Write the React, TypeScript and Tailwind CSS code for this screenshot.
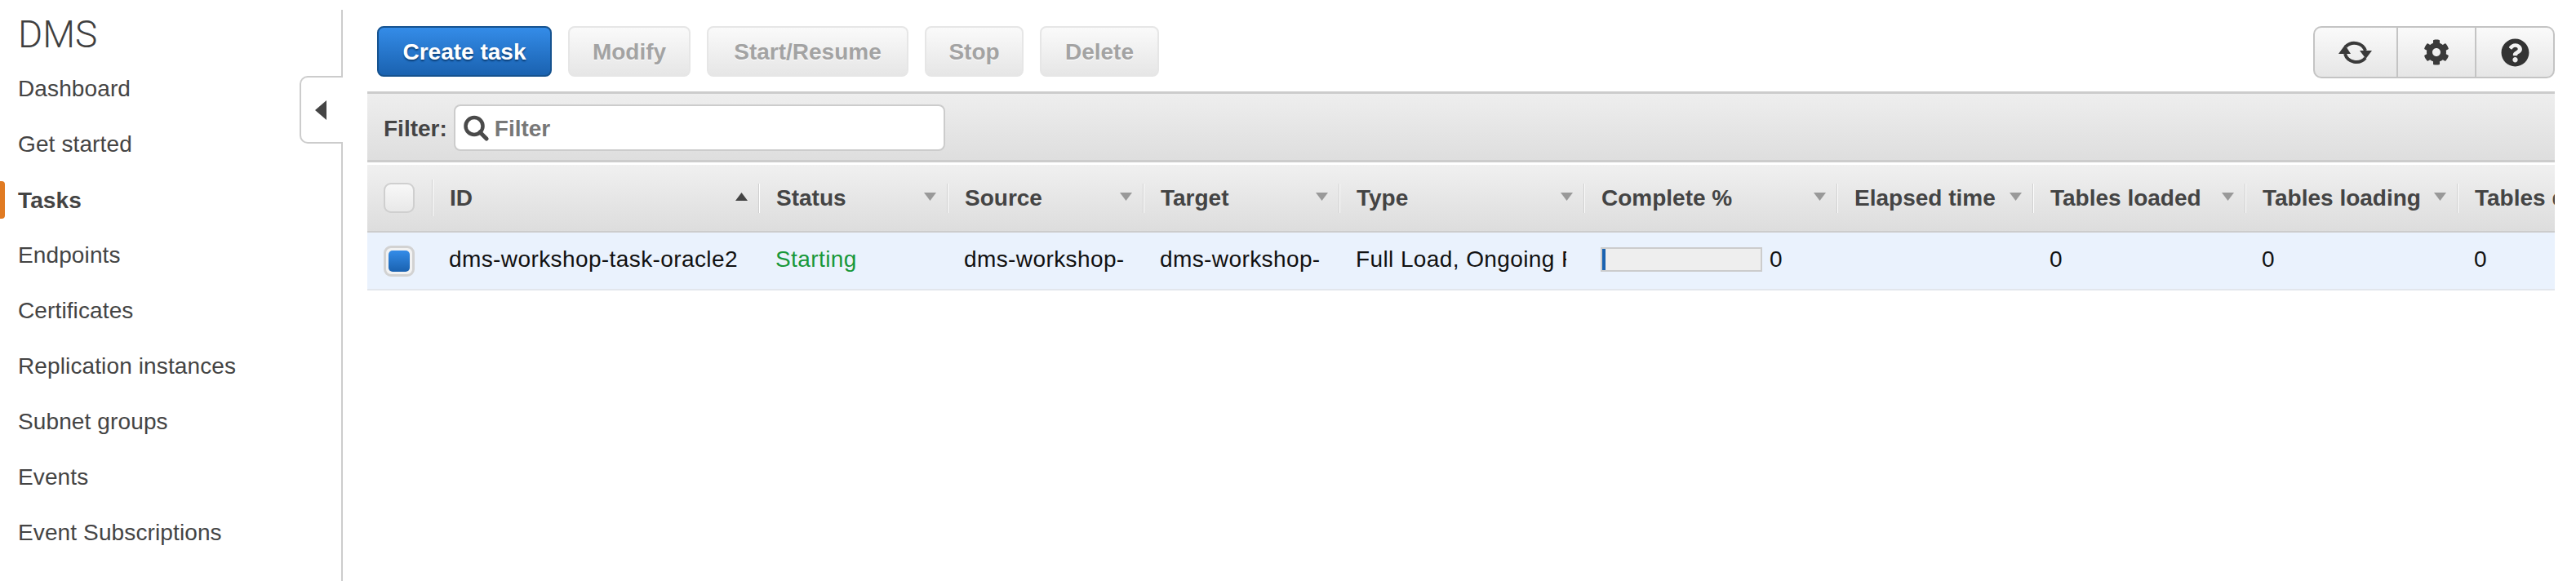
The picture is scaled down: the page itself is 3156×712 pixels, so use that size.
import { FaCog, FaQuestionCircle } from 'react-icons/fa';

const navItems = [
  'Dashboard',
  'Get started',
  'Tasks',
  'Endpoints',
  'Certificates',
  'Replication instances',
  'Subnet groups',
  'Events',
  'Event Subscriptions',
];

const columns = [
  { label: 'ID', width: 'w-[400px]', sort: 'up', value: 'dms-workshop-task-oracle2' },
  { label: 'Status', width: 'w-[231px]', sort: 'down', value: 'Starting' },
  { label: 'Source', width: 'w-[240px]', sort: 'down', value: 'dms-workshop-' },
  { label: 'Target', width: 'w-[240px]', sort: 'down', value: 'dms-workshop-' },
  { label: 'Type', width: 'w-[300px]', sort: 'down', value: 'Full Load, Ongoing Replication' },
  { label: 'Complete %', width: 'w-[310px]', sort: 'down', value: '' },
  { label: 'Elapsed time', width: 'w-[240px]', sort: 'down', value: '' },
  { label: 'Tables loaded', width: 'w-[260px]', sort: 'down', value: '0' },
  { label: 'Tables loading', width: 'w-[260px]', sort: 'down', value: '0' },
  { label: 'Tables queued', width: 'w-[260px]', sort: 'none', value: '0' },
];

function Divider() {
  return <span className="h-[36px] w-[2px] shrink-0 border-l border-[#cfcfcf] bg-white" />;
}

function SortArrow({ dir }: { dir: string }) {
  if (dir === 'none') return null;
  return (
    <svg width="15" height="10" viewBox="0 0 15 10" className="mb-[4px] mr-[13px] shrink-0">
      <polygon
        points={dir === 'up' ? '7.5,0 15,10 0,10' : '0,0 15,0 7.5,10'}
        fill={dir === 'up' ? '#444444' : '#999999'}
      />
    </svg>
  );
}

function ActionButton({ label, width }: { label: string; width: string }) {
  return (
    <button
      className={`h-[62px] rounded-[8px] border-2 border-[#e6e6e6] bg-gradient-to-b from-[#fafafa] to-[#e6e6e6] pt-[2px] text-[28px] font-bold text-[#a3a3a3] [text-shadow:0_1px_0_#ffffff] ${width}`}
    >
      {label}
    </button>
  );
}

function RefreshIcon() {
  return (
    <svg width="42" height="36" viewBox="0 0 42 36" fill="none">
      <path d="M9 11 A14.5 14 0 0 1 33 16" stroke="#3a3a3a" strokeWidth="4" />
      <path d="M33 25 A14.5 14 0 0 1 8 20" stroke="#3a3a3a" strokeWidth="4" />
      <polygon points="26,16 41,16 33.5,26" fill="#3a3a3a" />
      <polygon points="0,20 15,20 8,9" fill="#3a3a3a" />
    </svg>
  );
}

function SearchIcon() {
  return (
    <svg width="32" height="32" viewBox="0 0 32 32" fill="none" className="shrink-0">
      <circle cx="14" cy="13.5" r="10.5" stroke="#4a4a4a" strokeWidth="4.5" />
      <path d="M21 21 L29 29" stroke="#4a4a4a" strokeWidth="5" strokeLinecap="round" />
    </svg>
  );
}

export default function App() {
  return (
    <div className="flex h-[712px] w-[3156px] overflow-hidden bg-white font-['Liberation_Sans',Arial,sans-serif] text-[28px]">
      <aside className="relative mt-[12px] w-[420px] shrink-0 border-r-2 border-[#cccccc]">
        <h1 className="pl-[22px] pt-[5px] font-['Roboto',sans-serif] text-[46px] font-light leading-[50px] text-[#3f3f3f]">
          DMS
        </h1>
        <nav className="mt-[8px] flex flex-col tracking-[0.12px]">
          {navItems.map((item) => (
            <a
              key={item}
              className={`flex h-[68px] items-center pl-[22px] text-[#444444] ${
                item === 'Tasks' ? 'pt-[2px] font-bold' : ''
              }`}
            >
              {item}
            </a>
          ))}
        </nav>
        <span className="absolute left-0 top-[210px] h-[46px] w-[6px] rounded-r-[4px] bg-[#e07a22]" />
        <button className="absolute left-[367px] top-[81px] flex h-[83px] w-[53px] items-center rounded-l-[10px] border-2 border-r-0 border-[#cccccc] bg-white pl-[17px]">
          <svg width="14" height="24" viewBox="0 0 14 24">
            <polygon points="14,0 14,24 0,12" fill="#444444" />
          </svg>
        </button>
      </aside>

      <main className="flex min-w-0 flex-1 flex-col pl-[30px] pr-[26px]">
        <div className="flex h-[112px] shrink-0 items-start justify-between pt-[32px] pl-[12px]">
          <div className="flex gap-[20px]">
            <button className="h-[62px] w-[214px] rounded-[8px] border-2 border-[#15528f] bg-gradient-to-b from-[#348ce8] to-[#1a62b0] pt-[2px] text-[28px] font-bold text-white [text-shadow:0_2px_2px_#0b3f77]">
              Create task
            </button>
            <ActionButton label="Modify" width="w-[150px]" />
            <ActionButton label="Start/Resume" width="w-[247px]" />
            <ActionButton label="Stop" width="w-[121px]" />
            <ActionButton label="Delete" width="w-[146px]" />
          </div>
          <div className="flex h-[64px] w-[296px] divide-x-2 divide-[#c4c4c4] rounded-[10px] border-2 border-[#c4c4c4] bg-gradient-to-b from-[#fafafa] to-[#e6e6e6]">
            <button className="flex w-[102px] items-center justify-center">
              <RefreshIcon />
            </button>
            <button className="flex w-[96px] items-center justify-center">
              <FaCog size={32} color="#3a3a3a" />
            </button>
            <button className="flex flex-1 items-center justify-center">
              <FaQuestionCircle size={35} color="#333333" />
            </button>
          </div>
        </div>

        <div className="flex h-[87px] shrink-0 items-center border-y-[3px] border-[#cccccc] bg-gradient-to-b from-[#eeeeee] to-[#dedede] pl-[20px] pt-[2px]">
          <label className="pt-[2px] font-bold text-[#444444]">Filter:</label>
          <div className="ml-[8px] flex h-[57px] w-[602px] items-center gap-[7px] rounded-[8px] border-2 border-[#cccccc] bg-white pl-[9px]">
            <SearchIcon />
            <span className="pt-[2px] font-bold text-[#777777]">Filter</span>
          </div>
        </div>

        <div className="mt-[3px] flex h-[83px] shrink-0 items-center overflow-hidden border-b-2 border-[#cccccc] bg-gradient-to-b from-[#f0f0f0] to-[#dddddd]">
          <div className="flex h-full w-[81px] shrink-0 items-center pl-[20px]">
            <span className="h-[37px] w-[38px] rounded-[9px] border-2 border-[#cfcfcf] bg-gradient-to-b from-[#f8f8f8] to-[#e8e8e8]" />
            <span className="ml-auto h-[45px] w-[2px] border-l border-[#cfcfcf] bg-white" />
          </div>
          {columns.map((col) => (
            <div key={col.label} className={`flex h-full shrink-0 items-center pl-[20px] ${col.width}`}>
              <span className="min-w-0 flex-1 whitespace-nowrap font-bold text-[#444444]">{col.label}</span>
              <SortArrow dir={col.sort} />
              <Divider />
            </div>
          ))}
        </div>

        <div className="flex h-[71px] shrink-0 items-center overflow-hidden border-b-2 border-[#e2e6ec] bg-[#eaf2fd] tracking-[0.4px] text-[#111111]">
          <div className="flex w-[81px] shrink-0 pl-[20px]">
            <span className="flex h-[38px] w-[38px] items-center justify-center rounded-[9px] border-[3px] border-[#d2d2d2] bg-[#f2f2f2]">
              <span className="h-[26px] w-[26px] rounded-[5px] bg-gradient-to-b from-[#348ce8] to-[#1a62b0]" />
            </span>
          </div>
          {columns.map((col) => (
            <div key={col.label} className={`flex shrink-0 items-center pb-[3px] pl-[19px] ${col.width}`}>
              {col.label === 'Complete %' ? (
                <>
                  <span className="h-[30px] w-[198px] border-2 border-[#cccccc] bg-[#eeeeee]">
                    <span className="block h-full w-[4px] bg-[#1a62b0]" />
                  </span>
                  <span className="ml-[9px]">0</span>
                </>
              ) : col.label === 'Status' ? (
                <span className="text-[#18983a]">{col.value}</span>
              ) : col.label === 'Type' ? (
                <span className="block max-w-[258px] overflow-hidden whitespace-nowrap">{col.value}</span>
              ) : (
                <span className="whitespace-nowrap">{col.value}</span>
              )}
            </div>
          ))}
        </div>
      </main>
    </div>
  );
}
